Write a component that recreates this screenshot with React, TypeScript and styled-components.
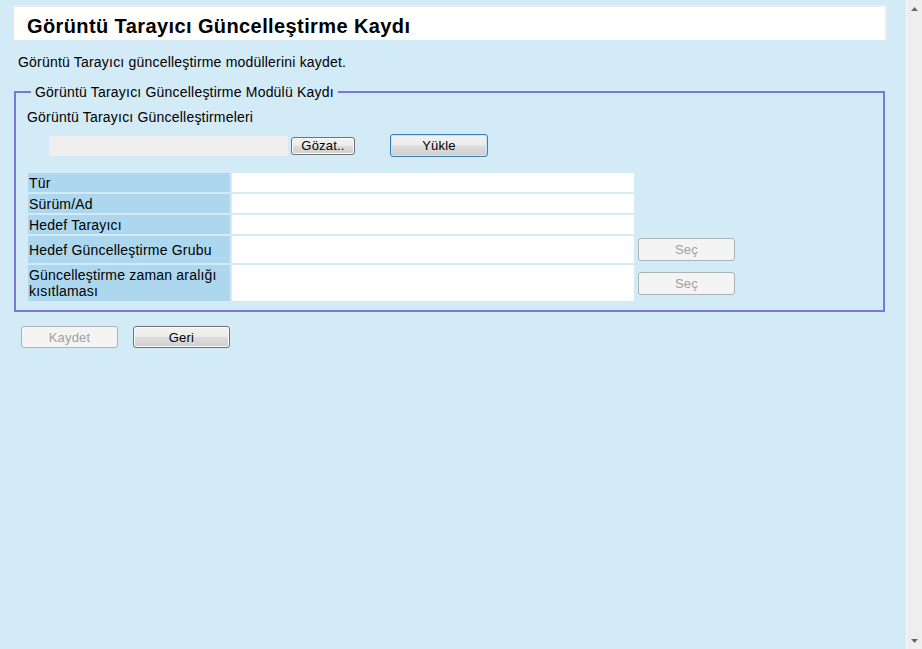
import { Fragment } from "react";
import styled, { createGlobalStyle } from "styled-components";

const GlobalStyle = createGlobalStyle`
  html, body {
    margin: 0;
    padding: 0;
    height: 100%;
  }
  body {
    font-family: "Liberation Sans", Arial, sans-serif;
    font-size: 14px;
    letter-spacing: 0.2px;
    color: #000;
  }
  #root {
    height: 100%;
  }
`;

const Window = styled.div`
  display: flex;
  width: 100%;
  height: 100vh;
  overflow: hidden;
  background: #d3eaf7;
`;

const Page = styled.main`
  flex: 1;
  padding: 5px 19px 0 14px;
`;

const TitleBar = styled.div`
  box-sizing: border-box;
  height: 35px;
  background: #fff;
  border-top: 2px solid #ececec;
  border-right: 2px solid #ececec;
  padding: 7px 0 0 13px;
`;

const Title = styled.h1`
  margin: 0;
  font-size: 20px;
  line-height: 24px;
  font-weight: bold;
  letter-spacing: 0.4px;
`;

const Intro = styled.p`
  margin: 14px 0 0 4px;
  line-height: 16px;
`;

const Group = styled.fieldset`
  margin: 14px 2px 0 0;
  padding: 9px 11px 9px 11px;
  border: 2px solid #7878dc;
  min-width: 0;
`;

const Legend = styled.legend`
  margin-left: 4px;
  padding: 0 4px;
  line-height: 16px;
`;

const Label = styled.div`
  line-height: 16px;
`;

const FileRow = styled.div`
  display: flex;
  align-items: center;
  height: 23px;
  margin: 9px 0 0 22px;
`;

const FileField = styled.input`
  box-sizing: border-box;
  width: 239px;
  height: 20px;
  border: none;
  background: #efefef;
  margin: 0 3px 0 0;
  padding: 0;
`;

const Button = styled.button<{ $w: number; $h: number; $primary?: boolean }>`
  box-sizing: border-box;
  flex-shrink: 0;
  width: ${(p) => p.$w}px;
  height: ${(p) => p.$h}px;
  padding: 0;
  font-family: "Liberation Sans", Arial, sans-serif;
  font-size: 13px;
  letter-spacing: 0.2px;
  color: #000;
  border: 1px solid ${(p) => (p.$primary ? "#3c7fb1" : "#707070")};
  border-radius: 3px;
  background: linear-gradient(#f2f2f2 0%, #ebebeb 48%, #dddddd 52%, #cfcfcf 100%);
  box-shadow: ${(p) =>
    p.$primary ? "inset 0 0 0 1px #bfe6fa" : "inset 0 0 0 1px #fcfcfc"};
  cursor: default;

  &:disabled {
    color: #a0a0a0;
    border-color: #adb2b5;
    background: #f4f4f4;
    box-shadow: none;
  }
`;

const InfoGrid = styled.div`
  display: grid;
  grid-template-columns: 202px 402px 99px;
  grid-template-rows: 19px 19px 19px 27px 36px;
  column-gap: 2px;
  row-gap: 2px;
  margin: 16px 0 0 1px;
`;

const Head = styled.div`
  grid-column: 1;
  display: flex;
  align-items: center;
  padding-left: 1px;
  background: #acd7ef;
  line-height: 16px;
`;

const Value = styled.div`
  grid-column: 2;
  background: #fff;
`;

const PickCell = styled.div`
  grid-column: 3;
  display: flex;
  align-items: center;
  padding-left: 2px;
`;

const Actions = styled.div`
  display: flex;
  gap: 15px;
  margin: 14px 0 0 7px;
`;

const ScrollBar = styled.div`
  width: 16px;
  flex-shrink: 0;
  border-left: 1px solid #fbfbfb;
  background: #eeeeee;
  display: flex;
  flex-direction: column;
  justify-content: space-between;
  align-items: center;
  padding: 7px 0 6px;
  box-sizing: border-box;
`;

const Arrow = ({ down }: { down?: boolean }) => (
  <svg width="7" height="4" viewBox="0 0 7 4">
    <path
      d={down ? "M0 0 H7 L3.5 4 Z" : "M3.5 0 L7 4 H0 Z"}
      fill="#6a6a6a"
    />
  </svg>
);

const rows = [
  { label: "Tür" },
  { label: "Sürüm/Ad" },
  { label: "Hedef Tarayıcı" },
  { label: "Hedef Güncelleştirme Grubu", pick: true },
  { label: "Güncelleştirme zaman aralığı kısıtlaması", pick: true },
];

export default function App() {
  return (
    <>
      <GlobalStyle />
      <Window>
        <Page>
          <TitleBar>
            <Title>Görüntü Tarayıcı Güncelleştirme Kaydı</Title>
          </TitleBar>
          <Intro>Görüntü Tarayıcı güncelleştirme modüllerini kaydet.</Intro>

          <Group>
            <Legend>Görüntü Tarayıcı Güncelleştirme Modülü Kaydı</Legend>
            <Label>Görüntü Tarayıcı Güncelleştirmeleri</Label>
            <FileRow>
              <FileField type="text" readOnly />
              <Button $w={64} $h={18}>Gözat..</Button>
              <Button $w={98} $h={23} $primary style={{ marginLeft: 35 }}>
                Yükle
              </Button>
            </FileRow>

            <InfoGrid>
              {rows.map((r) => (
                <Fragment key={r.label}>
                  <Head>{r.label}</Head>
                  <Value />
                  {r.pick && (
                    <PickCell>
                      <Button $w={97} $h={23} disabled>
                        Seç
                      </Button>
                    </PickCell>
                  )}
                </Fragment>
              ))}
            </InfoGrid>
          </Group>

          <Actions>
            <Button $w={97} $h={22} disabled>
              Kaydet
            </Button>
            <Button $w={97} $h={22}>
              Geri
            </Button>
          </Actions>
        </Page>
        <ScrollBar>
          <Arrow />
          <Arrow down />
        </ScrollBar>
      </Window>
    </>
  );
}
